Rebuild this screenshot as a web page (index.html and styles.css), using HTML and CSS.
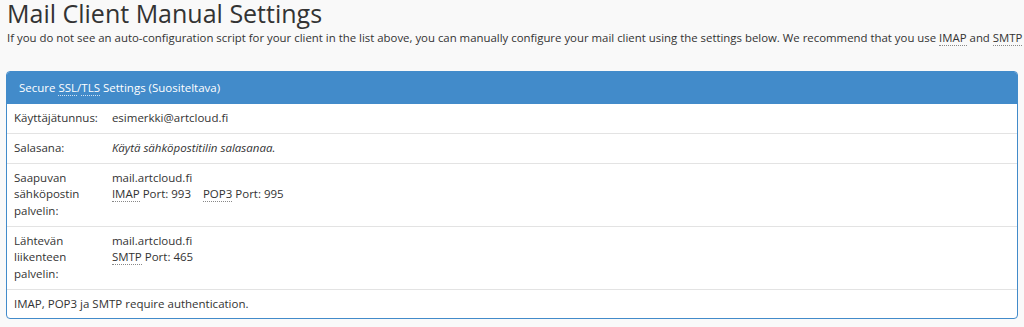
FILE: index.html
```html
<!DOCTYPE html>
<html lang="en">
<head>
    <meta charset="UTF-8">
    <title>Mail Client Manual Settings</title>
    <link rel="stylesheet" href="styles.css">
</head>
<body>
    <h1>Mail Client Manual Settings</h1>
    <p class="intro">If you do not see an auto-configuration script for your client in the list above, you can manually configure your mail client using the settings below. We recommend that you use <abbr title="Internet Message Access Protocol">IMAP</abbr> and <abbr title="Simple Mail Transfer Protocol">SMTP</abbr> for security reasons.</p>

    <div class="panel">
        <div class="panel-heading">Secure <abbr>SSL</abbr>/<abbr>TLS</abbr> Settings (Suositeltava)</div>
        <table class="settings">
            <tr>
                <td class="label">Käyttäjätunnus:</td>
                <td>esimerkki@artcloud.fi</td>
            </tr>
            <tr>
                <td class="label">Salasana:</td>
                <td><em>Käytä sähköpostitilin salasanaa.</em></td>
            </tr>
            <tr>
                <td class="label">Saapuvan sähköpostin palvelin:</td>
                <td>mail.artcloud.fi<br><abbr>IMAP</abbr> Port: 993 &nbsp;&nbsp; <abbr>POP3</abbr> Port: 995</td>
            </tr>
            <tr>
                <td class="label">Lähtevän liikenteen palvelin:</td>
                <td>mail.artcloud.fi<br><abbr>SMTP</abbr> Port: 465</td>
            </tr>
            <tr>
                <td colspan="2">IMAP, POP3 ja SMTP require authentication.</td>
            </tr>
        </table>
    </div>
</body>
</html>
```

FILE: styles.css
```css
* {
    margin: 0;
    padding: 0;
    box-sizing: border-box;
}
body {
    font-family: "Open Sans", sans-serif;
    font-size: 11.5px;
    color: #333;
    background-color: #f9f9f9;
    padding: 0 6px;
    overflow: hidden;
}
h1 {
    font-size: 25px;
    font-weight: normal;
    line-height: 27px;
    padding-left: 1px;
    color: #333;
}
.intro {
    font-size: 11.4px;
    line-height: 20px;
    margin-top: 1px;
    white-space: nowrap;
    padding-left: 1px;
}
abbr {
    text-decoration: none;
    border-bottom: 1px dotted #888;
}
.panel {
    margin-top: 23px;
    border: 1px solid #428bca;
    border-radius: 4px;
    background: #fff;
    overflow: hidden;
}
.panel-heading {
    background-color: #428bca;
    color: #fff;
    padding: 8px 12px;
    line-height: 16px;
}
.panel-heading abbr {
    border-bottom-color: #cfe2f3;
}
.settings {
    width: 100%;
    border-collapse: collapse;
}
.settings td {
    padding: 6.2px 7px;
    line-height: 16.5px;
    vertical-align: top;
    border-top: 1px solid #e3e3e3;
}
.settings tr:first-child td {
    border-top: none;
}
.settings .label {
    width: 97px;
}
```
